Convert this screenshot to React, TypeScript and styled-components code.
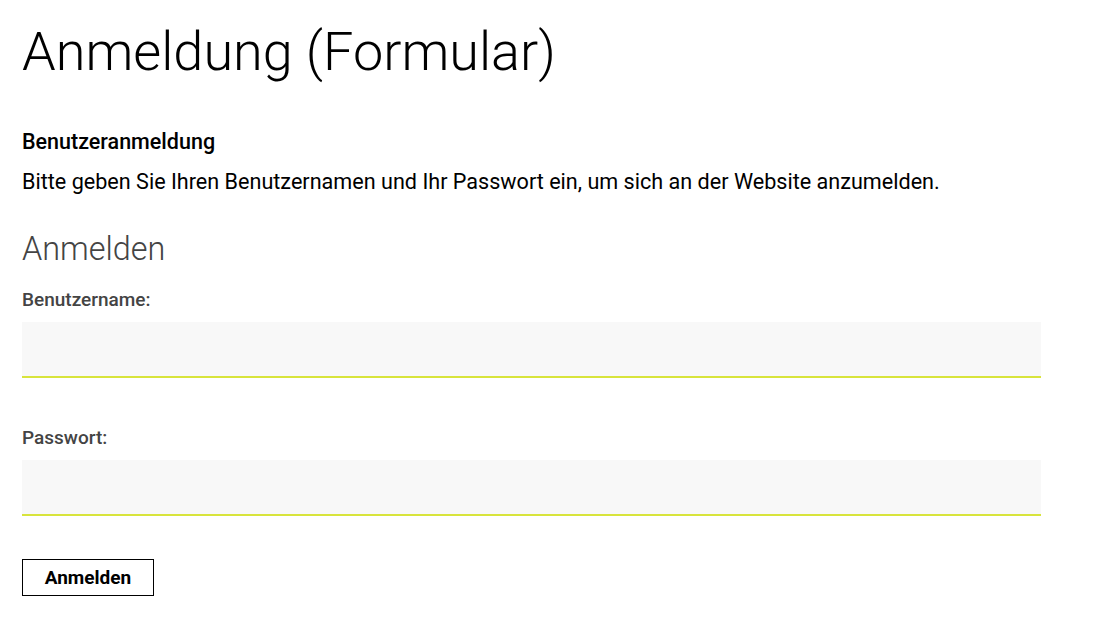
import styled, { createGlobalStyle } from 'styled-components';

const GlobalStyle = createGlobalStyle`
body {
  margin: 0;
  background: #fff;
  font-family: Roboto, "Liberation Sans", sans-serif;
  color: #000;
}
`;

const Page = styled.div`
padding: 18px 22px 0 22px;
width: 1019px;
`;

const Title = styled.h1`
margin: 0;
font-size: 54px;
font-weight: 300;
line-height: 68px;
`;

const Intro = styled.div`
margin-top: 41px;
`;

const IntroHead = styled.div`
font-size: 21.5px;
font-weight: 500;
line-height: 30px;
`;

const IntroText = styled.p`
margin: 10px 0 0 0;
font-size: 21.6px;
line-height: 30px;
`;

const FormTitle = styled.h2`
margin: 32px 0 0 0;
font-size: 32.4px;
font-weight: 300;
color: #444;
line-height: 40px;
`;

const Field = styled.div<{ $top: number }>`
display: flex;
flex-direction: column;
gap: 10px;
margin-top: ${(p) => p.$top}px;
`;

const Label = styled.label`
font-size: 19px;
font-weight: 500;
color: #444;
line-height: 24px;
`;

const Input = styled.input`
box-sizing: border-box;
width: 100%;
height: 56px;
border: none;
border-bottom: 2px solid #d8e43c;
background: #f8f8f8;
outline: none;
font-size: 17px;
padding: 0 12px;
`;

const Button = styled.button`
margin-top: 43px;
width: 132px;
height: 37px;
background: #fff;
border: 1px solid #000;
font-family: Roboto, "Liberation Sans", sans-serif;
font-size: 19px;
font-weight: 700;
color: #000;
cursor: pointer;
`;

export default function App() {
  return (
    <>
      <GlobalStyle />
      <Page>
        <Title>Anmeldung (Formular)</Title>
        <Intro>
          <IntroHead>Benutzeranmeldung</IntroHead>
          <IntroText>Bitte geben Sie Ihren Benutzernamen und Ihr Passwort ein, um sich an der Website anzumelden.</IntroText>
        </Intro>
        <FormTitle>Anmelden</FormTitle>
        <Field $top={19}>
          <Label htmlFor="user">Benutzername:</Label>
          <Input id="user" type="text" />
        </Field>
        <Field $top={48}>
          <Label htmlFor="pass">Passwort:</Label>
          <Input id="pass" type="password" />
        </Field>
        <Button>Anmelden</Button>
      </Page>
    </>
  );
}
